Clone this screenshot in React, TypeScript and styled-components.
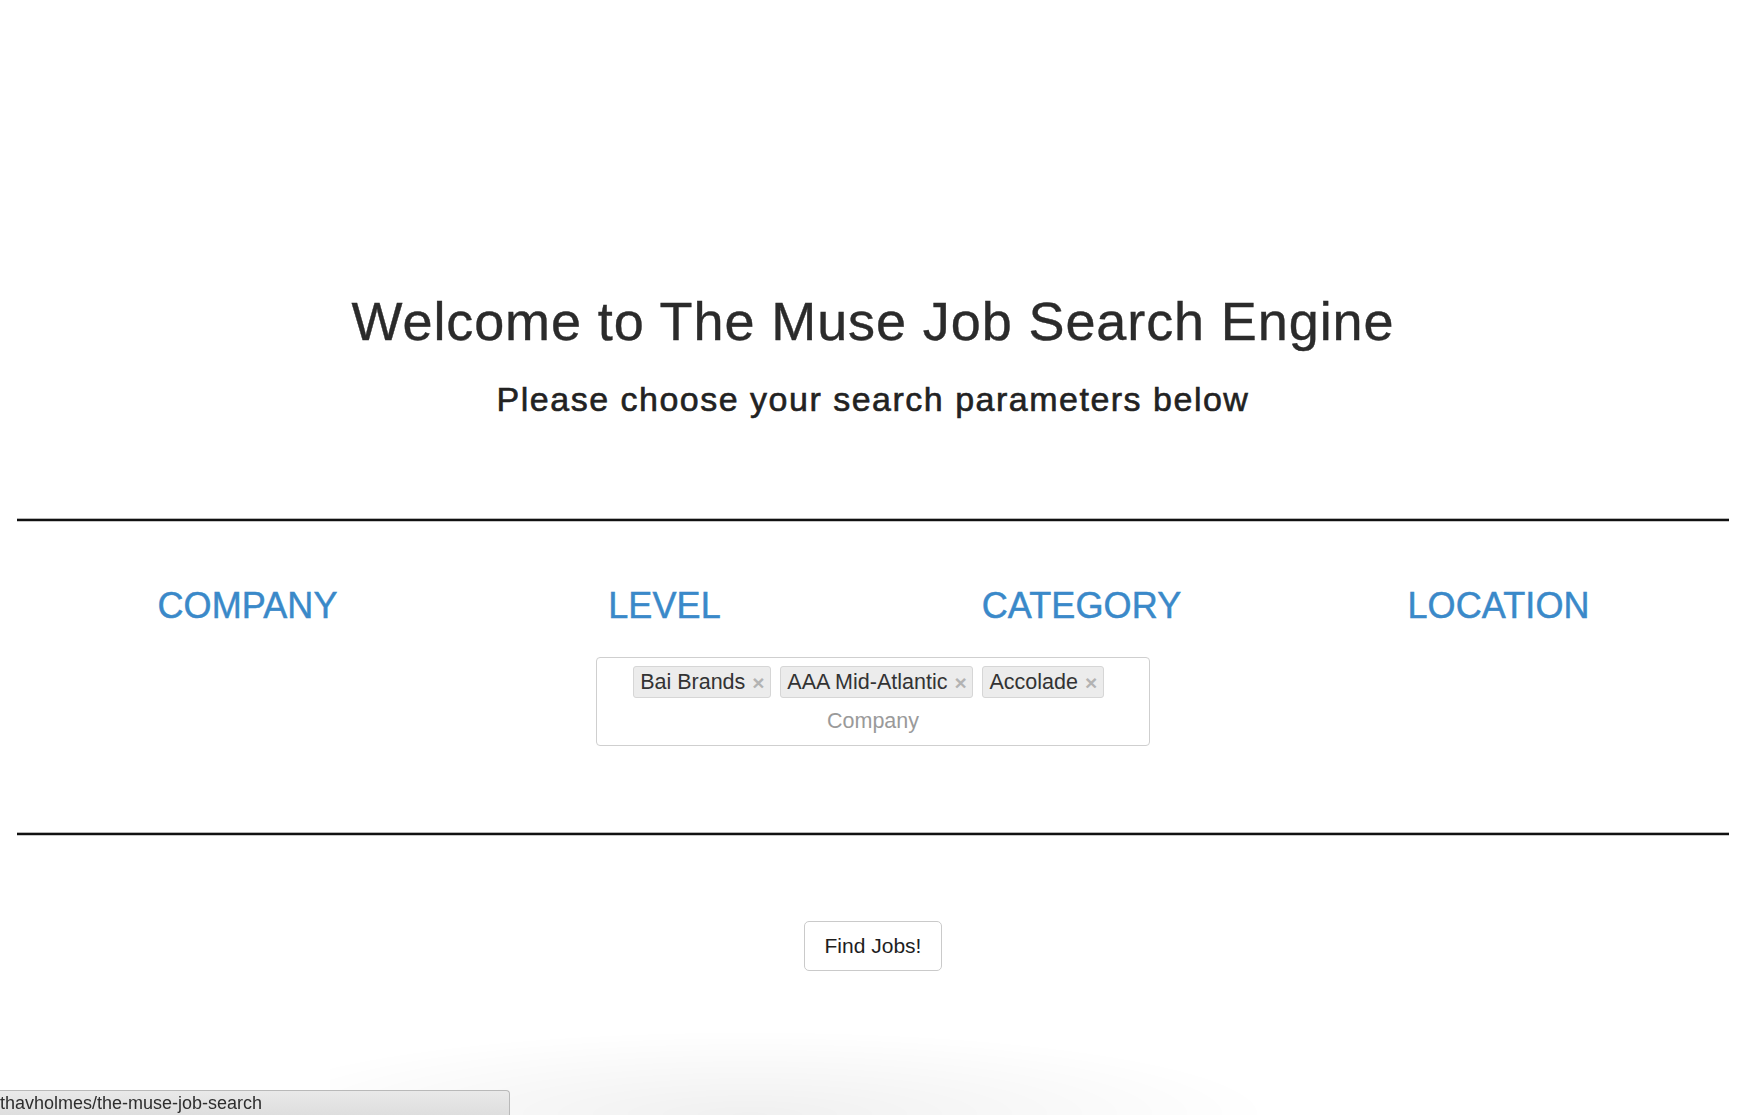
import React from "react";
import styled, { createGlobalStyle } from "styled-components";

const GlobalStyle = createGlobalStyle`
  html, body {
    margin: 0;
    padding: 0;
    background: #ffffff;
    font-family: "Liberation Sans", Arial, Helvetica, sans-serif;
  }
  * { box-sizing: border-box; }
`;

const Page = styled.div`
  padding: 291px 17px 0;
  min-height: 1115px;
`;

const Title = styled.h1`
  margin: 0;
  text-align: center;
  font-size: 54px;
  line-height: 60px;
  font-weight: 400;
  letter-spacing: 0.9px;
  -webkit-text-stroke: 0.4px #2b2b2b;
  color: #2b2b2b;
`;

const Subtitle = styled.h3`
  margin: 28px 0 0;
  text-align: center;
  font-size: 34px;
  line-height: 40px;
  font-weight: 400;
  letter-spacing: 1.5px;
  -webkit-text-stroke: 0.6px #222;
  color: #222;
`;

const Divider = styled.hr<{ $top: number }>`
  margin: ${(p) => p.$top}px 0 0;
  border: 0;
  height: 2px;
  background: #111;
  box-shadow: 0 -1px 0 #b5b5b5, 0 1px 0 #c8c8c8;
`;

const Filters = styled.section`
  padding-top: 65px;
`;

const HeaderRow = styled.div`
  width: 1668px;
  margin: 0 auto;
  display: grid;
  grid-template-columns: repeat(4, 1fr);
`;

const ColumnTitle = styled.h2`
  margin: 0;
  text-align: center;
  font-size: 36px;
  line-height: 40px;
  font-weight: 400;
  letter-spacing: 0.1px;
  -webkit-text-stroke: 0.5px #3a89c9;
  color: #3a89c9;
`;

const TagBox = styled.div`
  width: 554px;
  height: 89px;
  margin: 31px auto 0;
  border: 1px solid #cfcfcf;
  border-radius: 4px;
  padding: 8px 8px 12px;
  display: flex;
  flex-direction: column;
  align-items: stretch;
  gap: 11px;
`;

const TagList = styled.div`
  display: flex;
  justify-content: center;
  gap: 9px;
  padding-right: 9px;
`;

const Tag = styled.span`
  display: inline-flex;
  align-items: center;
  height: 32px;
  padding: 0 7px 0 6px;
  gap: 7px;
  background: #ececec;
  border: 1px solid #d6d6d6;
  border-radius: 3px;
  font-size: 21.5px;
  color: #333;
`;

const Remove = styled.span`
  font-size: 21px;
  font-weight: 700;
  color: #b3b3b3;
  line-height: 1;
  width: 11px;
  text-align: center;
`;

const Placeholder = styled.span`
  text-align: center;
  font-size: 21.5px;
  line-height: 24px;
  color: #9a9a9a;
`;

const Actions = styled.div`
  display: flex;
  justify-content: center;
  padding-top: 86px;
`;

const Button = styled.button`
  width: 138px;
  height: 50px;
  background: #fff;
  border: 1px solid #cacaca;
  border-radius: 5px;
  font-family: "Liberation Sans", Arial, sans-serif;
  font-size: 21px;
  color: #1e1e1e;
  cursor: pointer;
`;

const BottomShade = styled.div`
  position: fixed;
  left: 330px;
  bottom: 0;
  width: 1050px;
  height: 85px;
  background: radial-gradient(ellipse 50% 100% at 40% 100%, rgba(0, 0, 0, 0.06), rgba(0, 0, 0, 0) 100%);
  pointer-events: none;
`;

const StatusBar = styled.div`
  position: fixed;
  left: 0;
  bottom: 0;
  width: 510px;
  height: 25px;
  background: linear-gradient(#e9e9e9, #dedede);
  border-top: 1px solid #b9b9b9;
  border-right: 1px solid #b9b9b9;
  border-top-right-radius: 4px;
  font-family: "Liberation Sans", Arial, sans-serif;
  font-size: 18px;
  line-height: 24px;
  color: #2e2e2e;
  white-space: nowrap;
  overflow: hidden;
`;

const StatusText = styled.span`
  display: inline-block;
  margin-left: 0;
`;

const tags = ["Bai Brands", "AAA Mid-Atlantic", "Accolade"];
const columns = ["COMPANY", "LEVEL", "CATEGORY", "LOCATION"];

export default function App() {
  return (
    <>
      <GlobalStyle />
      <Page>
        <Title>Welcome to The Muse Job Search Engine</Title>
        <Subtitle>Please choose your search parameters below</Subtitle>
        <Divider $top={100} />
        <Filters>
          <HeaderRow>
            {columns.map((c) => (
              <ColumnTitle key={c}>{c}</ColumnTitle>
            ))}
          </HeaderRow>
          <TagBox>
            <TagList>
              {tags.map((t) => (
                <Tag key={t}>
                  {t}
                  <Remove>×</Remove>
                </Tag>
              ))}
            </TagList>
            <Placeholder>Company</Placeholder>
          </TagBox>
        </Filters>
        <Divider $top={87} />
        <Actions>
          <Button>Find Jobs!</Button>
        </Actions>
      </Page>
      <BottomShade />
      <StatusBar>
        <StatusText>thavholmes/the-muse-job-search</StatusText>
      </StatusBar>
    </>
  );
}
